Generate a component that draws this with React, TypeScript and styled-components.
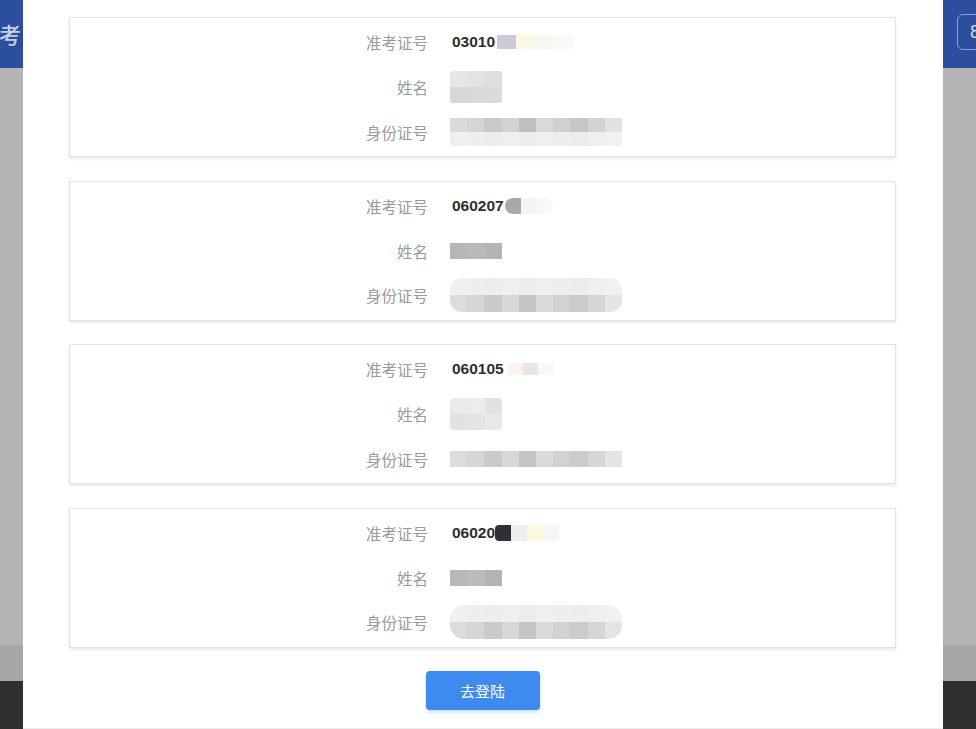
import React from 'react'
import styled, { createGlobalStyle } from 'styled-components'

const GlobalStyle = createGlobalStyle`
  html, body {
    margin: 0;
    padding: 0;
    background: #ffffff;
    font-family: 'Liberation Sans', 'Noto Sans CJK SC', sans-serif;
  }
`

type Blot = {
  rows: string[][]
  width: number
  height: number
  radius?: number
  gap?: number
}

type Candidate = {
  ticket: string
  ticketBlot: Blot
  nameBlot: Blot
  idBlot: Blot
}

const LIGHT_ID = ['#dadada', '#d5d5d5', '#c9c9c9', '#d2d2d2', '#bfbfbf', '#d9d9d9', '#d0d0d0', '#c6c6c6', '#d3d3d3', '#e2e2e2']
const SOFT_ID = ['#dcdcdc', '#d6d6d6', '#cacaca', '#d8d8d8', '#c4c4c4', '#dadada', '#d2d2d2', '#cbcbcb', '#d6d6d6', '#e4e4e4']
const HAZE = ['#f0f0f0', '#eeeeee', '#ededed', '#efefef', '#ececec', '#efefef', '#eeeeee', '#ededed', '#efefef', '#f1f1f1']

const candidates: Candidate[] = [
  {
    ticket: '03010',
    ticketBlot: { rows: [['#c9ccd8', '#fbf8e6', '#f7f7f2', '#f9f9f9']], width: 76, height: 14, gap: 2 },
    nameBlot: { rows: [['#e6e6e6', '#e3e3e3', '#dedede'], ['#d7d7d7', '#d9d9d9', '#dbdbdb']], width: 52, height: 32, radius: 3 },
    idBlot: { rows: [LIGHT_ID, HAZE], width: 172, height: 28 },
  },
  {
    ticket: '060207',
    ticketBlot: { rows: [['#a9a9a9', '#f4f4f4', '#f8f8f8']], width: 48, height: 16, radius: 8, gap: 1 },
    nameBlot: { rows: [['#b6b6b6', '#bababa', '#b4b4b4']], width: 52, height: 16 },
    idBlot: { rows: [HAZE, SOFT_ID], width: 172, height: 34, radius: 12 },
  },
  {
    ticket: '060105',
    ticketBlot: { rows: [['#fbf3ec', '#e6e6e6', '#f8f8f8']], width: 46, height: 12, gap: 4 },
    nameBlot: { rows: [['#eaeaea', '#ececec', '#e2e2e2'], ['#e2e2e2', '#e4e4e4', '#e9e9e9']], width: 52, height: 32, radius: 4 },
    idBlot: { rows: [SOFT_ID], width: 172, height: 16 },
  },
  {
    ticket: '06020',
    ticketBlot: { rows: [['#2f3036', '#eeeeee', '#fbf9df', '#f6f6f6']], width: 64, height: 16, radius: 4 },
    nameBlot: { rows: [['#b8b8b8', '#bcbcbc', '#b3b3b3']], width: 52, height: 16 },
    idBlot: { rows: [HAZE, SOFT_ID], width: 172, height: 34, radius: 14 },
  },
]

export default function App() {
  return (
    <>
      <GlobalStyle />
      <Screen>
        <SideStrip>
          <SideHeader $align="flex-end">
            <HeaderTitle>考</HeaderTitle>
          </SideHeader>
          <SideBody />
          <SideBand />
          <SideFooter />
        </SideStrip>

        <Modal>
          <CardList>
            {candidates.map((c) => (
              <Card key={c.ticket}>
                <Row>
                  <Label>准考证号</Label>
                  <Value>
                    <Ticket>{c.ticket}</Ticket>
                    <Mosaic blot={c.ticketBlot} />
                  </Value>
                </Row>
                <Row>
                  <Label>姓名</Label>
                  <Value>
                    <Mosaic blot={c.nameBlot} />
                  </Value>
                </Row>
                <Row>
                  <Label>身份证号</Label>
                  <Value>
                    <Mosaic blot={c.idBlot} />
                  </Value>
                </Row>
              </Card>
            ))}
          </CardList>
          <Footer>
            <LoginButton>去登陆</LoginButton>
          </Footer>
        </Modal>

        <SideStrip>
          <SideHeader $align="flex-start">
            <HeaderButton>8</HeaderButton>
          </SideHeader>
          <SideBody />
          <SideBand />
          <SideFooter />
        </SideStrip>
      </Screen>
    </>
  )
}

function Mosaic({ blot }: { blot: Blot }) {
  return (
    <MosaicBox $w={blot.width} $h={blot.height} $r={blot.radius ?? 0} $gap={blot.gap ?? 0}>
      {blot.rows.map((row, i) => (
        <MosaicRow key={i}>
          {row.map((color, j) => (
            <MosaicCell key={j} style={{ background: color }} />
          ))}
        </MosaicRow>
      ))}
    </MosaicBox>
  )
}

const Screen = styled.div`
  display: grid;
  grid-template-columns: 23px 920px 33px;
  width: 976px;
  height: 729px;
  overflow: hidden;
`

const SideStrip = styled.div`
  display: flex;
  flex-direction: column;
  overflow: hidden;
`

const SideHeader = styled.div<{ $align: string }>`
  height: 68px;
  flex: none;
  background: #2c4e9e;
  display: flex;
  align-items: center;
  justify-content: ${({ $align }) => $align};
`

const HeaderTitle = styled.span`
  color: #c9d1e6;
  font-family: 'Noto Sans CJK SC', sans-serif;
  font-size: 22px;
  font-weight: 500;
  margin-right: 2px;
  margin-bottom: 2px;
`

const HeaderButton = styled.div`
  flex: none;
  width: 44px;
  height: 36px;
  margin-left: 14px;
  margin-bottom: 4px;
  box-sizing: border-box;
  border: 1px solid #8ea0cf;
  border-radius: 6px;
  color: #d7dcec;
  font-size: 18px;
  line-height: 34px;
  padding-left: 12px;
`

const SideBody = styled.div`
  flex: 1;
  background: #b4b5b4;
`

const SideBand = styled.div`
  height: 36px;
  flex: none;
  background: #a6a7a6;
`

const SideFooter = styled.div`
  height: 48px;
  flex: none;
  background: #2f2f2f;
`

const Modal = styled.div`
  background: #ffffff;
  display: flex;
  flex-direction: column;
  padding: 17px 47px 0 46px;
  box-sizing: border-box;
  border-bottom: 1px solid #ececec;
`

const CardList = styled.div`
  display: flex;
  flex-direction: column;
  gap: 23.5px;
`

const Card = styled.div`
  height: 140px;
  box-sizing: border-box;
  border: 1px solid #e2e2e2;
  box-shadow: 0 2px 3px rgba(0, 0, 0, 0.09);
  padding: 2px 0;
  display: flex;
  flex-direction: column;
`

const Row = styled.div`
  height: 45px;
  display: grid;
  grid-template-columns: 358px 1fr;
  column-gap: 22px;
  align-items: center;
`

const Label = styled.div`
  text-align: right;
  color: #9a9a9a;
  font-family: 'Noto Sans CJK SC', sans-serif;
  font-size: 15.5px;
`

const Value = styled.div`
  display: flex;
  align-items: center;
`

const Ticket = styled.span`
  color: #2e2e2e;
  font-family: 'Liberation Sans', Arial, sans-serif;
  font-weight: 700;
  font-size: 15.5px;
  margin-left: 2px;
`

const MosaicBox = styled.div<{ $w: number; $h: number; $r: number; $gap: number }>`
  width: ${({ $w }) => $w}px;
  height: ${({ $h }) => $h}px;
  border-radius: ${({ $r }) => $r}px;
  margin-left: ${({ $gap }) => $gap}px;
  overflow: hidden;
  display: flex;
  flex-direction: column;
`

const MosaicRow = styled.div`
  flex: 1;
  display: flex;
`

const MosaicCell = styled.div`
  flex: 1;
`

const Footer = styled.div`
  display: flex;
  justify-content: center;
  padding-top: 23px;
`

const LoginButton = styled.button`
  width: 114px;
  height: 39px;
  border: none;
  border-radius: 4px;
  background: #3d8bef;
  box-shadow: 0 2px 4px rgba(61, 139, 239, 0.3);
  color: #ffffff;
  font-family: 'Noto Sans CJK SC', sans-serif;
  font-size: 15px;
  cursor: pointer;
`
